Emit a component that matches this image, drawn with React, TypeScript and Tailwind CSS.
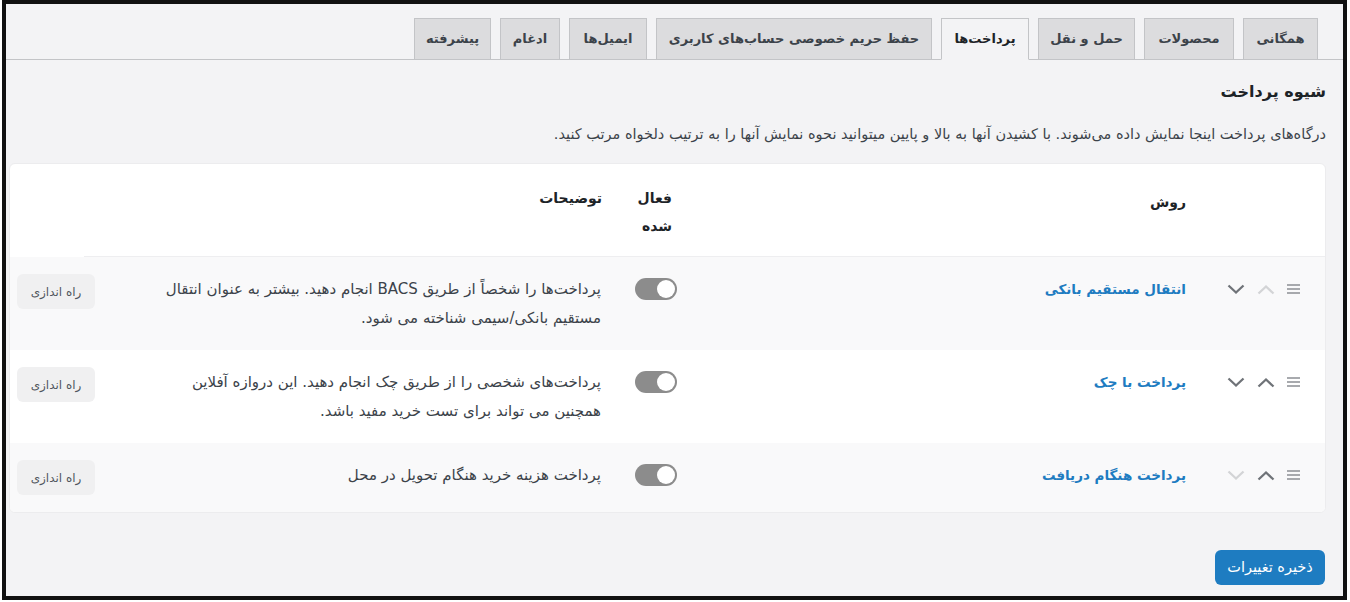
import React from 'react';

const FONT = { fontFamily: '"DejaVu Sans", "Noto Sans", sans-serif' };

const TABS = [
    { name: 'همگانی', width: 'w-[75px]' },
    { name: 'محصولات', width: 'w-[90px]' },
    { name: 'حمل و نقل', width: 'w-[97px]' },
    { name: 'پرداخت‌ها', width: 'w-[88px]', active: true },
    { name: 'حفظ حریم خصوصی حساب‌های کاربری', width: 'w-[276px]' },
    { name: 'ایمیل‌ها', width: 'w-[78px]' },
    { name: 'ادغام', width: 'w-[60px]' },
    { name: 'پیشرفته', width: 'w-[77px]' },
];

const GATEWAYS = [
    {
        name: 'انتقال مستقیم بانکی',
        desc: ['پرداخت‌ها را شخصاً از طریق BACS انجام دهید. بیشتر به عنوان انتقال', 'مستقیم بانکی/سیمی شناخته می شود.'],
        canUp: false,
        canDown: true,
        height: 'h-[93px]',
        bg: 'bg-[#f9f9fa]',
    },
    {
        name: 'پرداخت با چک',
        desc: ['پرداخت‌های شخصی را از طریق چک انجام دهید. این دروازه آفلاین', 'همچنین می تواند برای تست خرید مفید باشد.'],
        canUp: true,
        canDown: true,
        height: 'h-[93px]',
        bg: 'bg-white',
    },
    {
        name: 'پرداخت هنگام دریافت',
        desc: ['پرداخت هزینه خرید هنگام تحویل در محل'],
        canUp: true,
        canDown: false,
        height: 'h-[69px]',
        bg: 'bg-[#f9f9fa]',
    },
];

function Handle() {
    return (
        <svg width="13" height="10" viewBox="0 0 13 10" className="shrink-0">
            <path d="M0 1h13M0 5h13M0 9h13" stroke="#8c8f94" strokeWidth="1.5" />
        </svg>
    );
}

function Chevron({ up, enabled }: { up?: boolean; enabled: boolean }) {
    return (
        <svg width="18" height="11" viewBox="0 0 18 11" className="shrink-0">
            <path
                d={up ? 'M1.5 9.5L9 2.5L16.5 9.5' : 'M1.5 1.5L9 8.5L16.5 1.5'}
                fill="none"
                stroke={enabled ? '#6f7378' : '#d3d4d6'}
                strokeWidth="2.3"
            />
        </svg>
    );
}

function Toggle() {
    return (
        <div className="w-[42px] h-[22px] rounded-full bg-[#8c8c8c] flex items-center justify-start px-[2px]">
            <div className="w-[18px] h-[18px] rounded-full bg-white" />
        </div>
    );
}

export default function App() {
    return (
        <div dir="rtl" className="w-[1350px] h-[602px] bg-white pl-[2px] pr-[3px] pb-[2px]" style={FONT}>
            <div className="w-full h-full border-4 border-[#111] bg-[#f3f3f5] flex flex-col">
                {/* tabs */}
                <div className="h-[56px] border-b border-[#c3c4c7] flex items-end gap-[9px] pr-[25px] shrink-0">
                    {TABS.map((tab) => (
                        <div
                            key={tab.name}
                            className={
                                'h-[42px] -mb-px flex items-center justify-center border border-[#c3c4c7] text-[13px] font-bold whitespace-nowrap ' +
                                tab.width +
                                (tab.active
                                    ? ' bg-[#f3f3f5] border-b-[#f3f3f5] text-[#1d2327]'
                                    : ' bg-[#dcdcde] text-[#3c434a]')
                            }
                        >
                            {tab.name}
                        </div>
                    ))}
                </div>

                <div className="flex-1 pr-[17px] pl-[2px]">
                    <h2 className="mt-[18px] text-[16px] leading-[28px] font-bold text-[#1d2327]">شیوه پرداخت</h2>
                    <p className="mt-[17px] text-[14.5px] leading-[22px] text-[#3c434a]">
                        درگاه‌های پرداخت اینجا نمایش داده می‌شوند. با کشیدن آنها به بالا و پایین میتوانید نحوه نمایش آنها را به ترتیب دلخواه مرتب کنید.
                    </p>

                    <div className="mt-[18px] ml-px w-[1317px] bg-white rounded-md border border-[#ececee] overflow-hidden">
                        <div className="h-[93px] grid grid-cols-[125px_510px_75px_1fr_102px] pt-[20px] text-[14px] font-bold text-[#1d2327]">
                            <div className="border-b border-[#eeeef0]" />
                            <div className="pr-[14px] leading-[28px] pt-[4px] border-b border-[#eeeef0]">روش</div>
                            <div className="pr-[18px] leading-[28px] border-b border-[#eeeef0]">
                                <div className="w-[40px]">فعال شده</div>
                            </div>
                            <div className="pr-[13px] leading-[28px] border-b border-[#eeeef0]">توضیحات</div>
                            <div className="flex items-end">
                                <div className="w-[28px] border-b border-[#eeeef0]" />
                            </div>
                        </div>

                        {GATEWAYS.map((g) => (
                            <div key={g.name} className={'grid grid-cols-[125px_510px_75px_1fr_102px] ' + g.height + ' ' + g.bg}>
                                <div className="flex items-start pt-[27px] pr-[25px] gap-[12px]">
                                    <Handle />
                                    <Chevron up enabled={g.canUp} />
                                    <Chevron enabled={g.canDown} />
                                </div>
                                <div className="pr-[14px] pt-[18px] text-[13.5px] leading-[28px] font-bold text-[#1e7cc1]">{g.name}</div>
                                <div className="pr-[13px] pt-[21px]">
                                    <Toggle />
                                </div>
                                <div className="pr-[14px] pl-[10px] pt-[18px] text-[15px] leading-[29px] text-[#3c434a]">
                                    {g.desc.map((line) => (
                                        <div key={line} className="whitespace-nowrap">{line}</div>
                                    ))}
                                </div>
                                <div className="pr-[17px] pt-[17px]">
                                    <div className="w-[78px] h-[35px] rounded-md bg-[#f0f0f1] flex items-center justify-center text-[12px] text-[#50575e]">
                                        راه اندازی
                                    </div>
                                </div>
                            </div>
                        ))}
                    </div>

                    <div className="mt-[37px] pr-px">
                        <button className="w-[110px] h-[35px] rounded-md bg-[#1e7cc1] text-white text-[14.5px]">ذخیره تغییرات</button>
                    </div>
                </div>
            </div>
        </div>
    );
}
